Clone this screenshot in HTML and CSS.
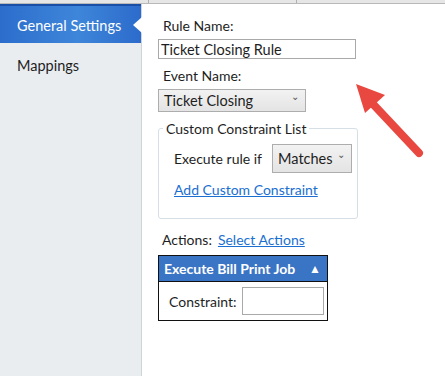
FILE: index.html
```html
<!DOCTYPE html>
<html lang="en">

<head>
    <meta charset="UTF-8">
    <title>Rule Settings</title>
    <link rel="stylesheet" href="styles.css">
</head>

<body>
    <div class="topbar">
        <span class="col"></span>
        <span class="col"></span>
        <span class="col last"></span>
    </div>

    <div class="page">
        <div class="sidebar">
            <div class="nav-item active">General Settings</div>
            <div class="nav-item">Mappings</div>
        </div>

        <div class="main">
            <div class="field">
                <label for="rule-name">Rule Name:</label>
                <input type="text" id="rule-name" class="text-input wide" value="Ticket Closing Rule">
            </div>

            <div class="field">
                <label for="event-name">Event Name:</label>
                <div class="select event">Ticket Closing <span class="chev">&#8964;</span></div>
            </div>

            <fieldset class="constraints">
                <legend>Custom Constraint List</legend>
                <div class="row">
                    <span>Execute rule if</span>
                    <div class="select matches">Matches <span class="chev">&#8964;</span></div>
                </div>
                <a href="#" class="link">Add Custom Constraint</a>
            </fieldset>

            <div class="actions">
                <span>Actions:</span>
                <a href="#" class="link">Select Actions</a>
            </div>

            <div class="panel">
                <div class="panel-head">
                    <span>Execute Bill Print Job</span>
                    <span class="caret">&#9650;</span>
                </div>
                <div class="panel-body">
                    <span>Constraint:</span>
                    <input type="text" class="text-input small">
                </div>
            </div>

            <!-- callout arrow -->
            <svg class="arrow" width="80" height="80" viewBox="0 0 80 80">
                <line x1="69" y1="70" x2="22" y2="20" stroke="#e8483f" stroke-width="8" stroke-linecap="round" />
                <polygon points="6,1 35,12 15,30" fill="#e8483f" />
            </svg>
        </div>
    </div>
</body>

</html>
```

FILE: styles.css
```css
html,
body {
    margin: 0;
    padding: 0;
    height: 100%;
}

body {
    font-family: 'Lato', 'Open Sans', sans-serif;
    font-size: 14px;
    color: #1e1e1e;
    background-color: #fff;
    overflow: hidden;
}

.topbar {
    display: flex;
    height: 3px;
    background-color: #e6e6e6;
    border-bottom: 1px solid #b9b9b9;
}

.topbar .col {
    width: 174px;
    border-right: 1px solid #b0b0b0;
}

.topbar .col.last {
    border-right: none;
}

.page {
    display: flex;
    height: 372px;
}

.sidebar {
    width: 141px;
    background-color: #e9edf0;
    border-right: 1px solid #cfd4d8;
    flex-shrink: 0;
}

.nav-item {
    position: relative;
    padding: 0 17px;
    height: 44px;
    line-height: 45px;
    font-size: 14.5px;
    white-space: nowrap;
}

.nav-item.active {
    color: #fff;
    background: linear-gradient(to right, #2c6dcc, #3e86da 55%, #2c6bcb);
    border-top: 2px solid #1a4fa8;
    height: 37px;
    line-height: 40px;
}

.nav-item.active::after {
    content: '';
    position: absolute;
    right: -1px;
    top: 11px;
    border-top: 8px solid transparent;
    border-bottom: 8px solid transparent;
    border-right: 9px solid #fff;
}

.main {
    position: relative;
    flex: 1;
    padding: 13px 0 0 16px;
}

.field label {
    display: block;
    padding-left: 5px;
    height: 22px;
    line-height: 18px;
}

.text-input {
    font-family: inherit;
    font-size: 14.5px;
    border: 1px solid #a9a9a9;
    padding: 0 2px;
    box-sizing: border-box;
    outline: none;
    color: #1e1e1e;
}

.text-input.wide {
    width: 198px;
    height: 20px;
    margin-bottom: 8px;
}

.select {
    position: relative;
    box-sizing: border-box;
    border: 1px solid #adadad;
    background: linear-gradient(#f2f2f2, #e4e4e4);
    font-size: 14.5px;
    line-height: 21px;
    padding-left: 5px;
}

.select .chev {
    position: absolute;
    right: 6px;
    top: -4px;
    font-size: 10px;
    color: #555;
}

.select.event {
    width: 148px;
    height: 23px;
}

.constraints {
    width: 200px;
    box-sizing: border-box;
    margin: 8px 0 0;
    padding: 7px 0 0 15px;
    height: 99px;
    border: 1px solid #d5dfe5;
    border-radius: 3px;
}

.constraints legend {
    padding: 0 3px;
    margin-left: -11px;
}

.row {
    display: flex;
    align-items: center;
    gap: 10px;
}

.select.matches {
    width: 80px;
    height: 29px;
    line-height: 27px;
}

.link {
    display: inline-block;
    margin-top: 8px;
    color: #1a6fd1;
    text-decoration: underline;
}

.actions {
    margin: 12px 0 0 4px;
    display: flex;
    gap: 6px;
}

.actions .link {
    margin: 0;
}

.panel {
    width: 168px;
    margin-top: 7px;
    border: 1px solid #111;
}

.panel-head {
    display: flex;
    justify-content: space-between;
    align-items: center;
    height: 25px;
    padding: 0 6px 0 5px;
    background-color: #3a74c4;
    color: #fff;
    font-weight: bold;
    border-bottom: 1px solid #111;
}

.caret {
    font-size: 12px;
}

.panel-body {
    display: flex;
    align-items: center;
    gap: 5px;
    height: 38px;
    padding-left: 10px;
}

.text-input.small {
    width: 82px;
    height: 28px;
}

.arrow {
    position: absolute;
    left: 208px;
    top: 79px;
}
```
